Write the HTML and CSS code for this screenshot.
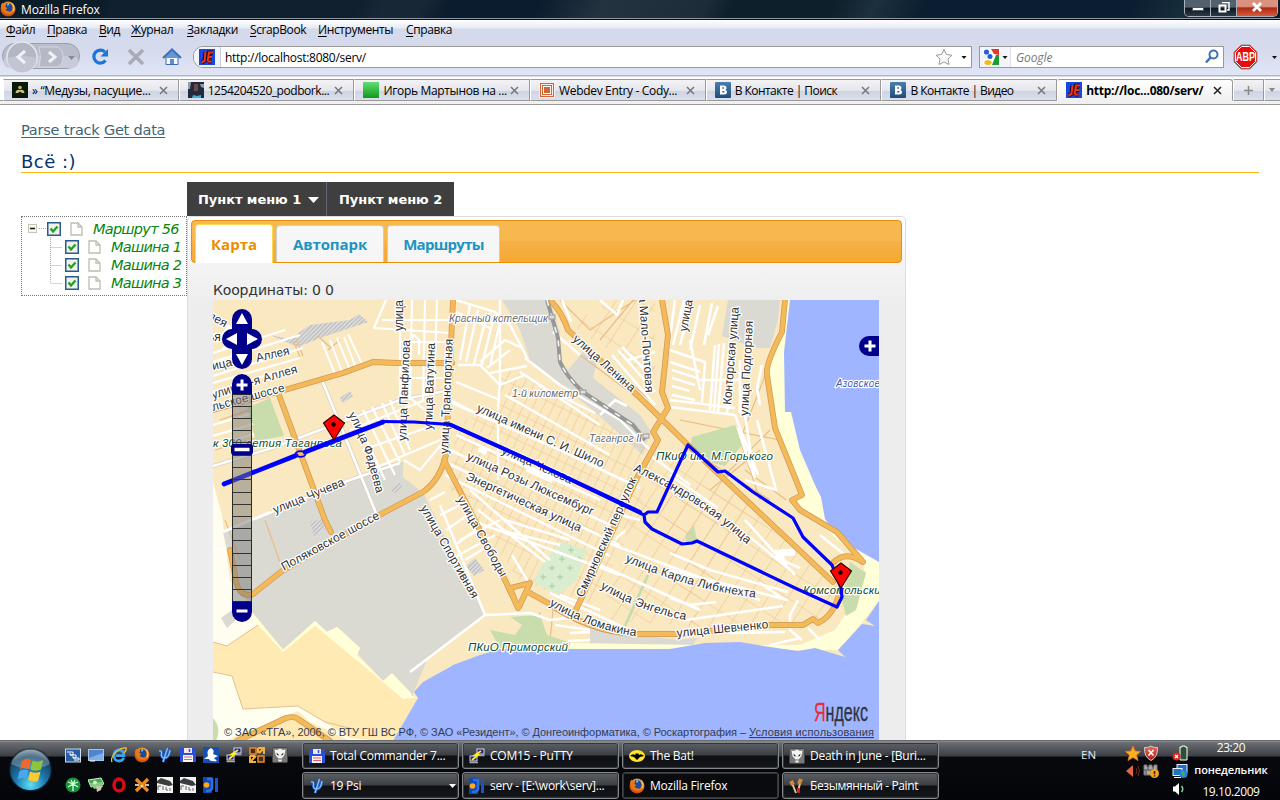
FILE: index.html
```html
<!DOCTYPE html>
<html lang="ru">
<head>
<meta charset="utf-8">
<title>Mozilla Firefox</title>
<link rel="stylesheet" href="styles.css">
</head>
<body>
<svg class="defs" width="0" height="0">
  <defs>
    <linearGradient id="gRed" x1="0" y1="0" x2="0" y2="1"><stop offset="0" stop-color="#f2695d"/><stop offset="1" stop-color="#b5160e"/></linearGradient>
    <radialGradient id="gFox" cx=".55" cy=".35" r=".7"><stop offset="0" stop-color="#ffd23c"/><stop offset=".55" stop-color="#f0801a"/><stop offset="1" stop-color="#b23408"/></radialGradient>
    <radialGradient id="gOrb" cx=".5" cy=".85" r=".9"><stop offset="0" stop-color="#5fe0f8"/><stop offset=".4" stop-color="#1c78ae"/><stop offset=".75" stop-color="#17405f"/><stop offset="1" stop-color="#9db4c2"/></radialGradient>
    <linearGradient id="gVk" x1="0" y1="0" x2="0" y2="1"><stop offset="0" stop-color="#4a7eae"/><stop offset="1" stop-color="#1f4d7a"/></linearGradient>
    <linearGradient id="gGreen" x1="0" y1="0" x2="0" y2="1"><stop offset="0" stop-color="#63dd72"/><stop offset="1" stop-color="#0e9a1c"/></linearGradient>
    <symbol id="fox" viewBox="0 0 16 16"><circle cx="8" cy="8" r="7.500" fill="url(#gFox)"/><path d="M6 2.500C9 1 12.500 3 12.600 6.800 12.600 9.500 11 11 9 11 7 11 6 10 5 8.500L7 7.500 5 6Z" fill="#1f4a9c"/><path d="M7 2.500 9.500 2 9 4 7.500 5Z" fill="#7fc4ee"/><path d="M1 4 2.500 1.500 4 3.500 6 4 5 6 7 7 5.500 8.500Q7 11 10 10.500 7 13 4 11 1 8 1 4Z" fill="#ec7613"/><path d="M12.500 2.500Q15 6 13.500 10" stroke="#ffd65a" fill="none"/></symbol>
    <symbol id="serv" viewBox="0 0 16 16"><rect width="16" height="16" fill="#1747e0"/><path d="M6.500 3 5.500 12 2.500 13.500M8.500 13 10 3.500H14M9.500 8H13M9 12.500H12.500" fill="none" stroke="#200a30" stroke-width="4"/><path d="M6.500 3 5.500 12 2.500 13.500M8.500 12.500 10 3.500H14M9.500 8H13M9 12.500H12.500" fill="none" stroke="#f2330d" stroke-width="2"/></symbol>
    <symbol id="vk" viewBox="0 0 16 16"><rect width="16" height="16" rx="1" fill="url(#gVk)"/><path d="M5 3.500V12.500H9Q12 12.500 12 10 12 8.300 10.300 8 11.500 7.500 11.500 6 11.500 3.500 8.800 3.500Z" fill="#fff"/><path d="M7.300 6H9M7.300 9.800H9.400" stroke="#34648f" stroke-width="1.400"/></symbol>
    <symbol id="x" viewBox="0 0 9 9"><path d="M1 1 8 8M8 1 1 8" stroke="currentColor" stroke-width="1.500"/></symbol>
    <symbol id="floppy" viewBox="0 0 16 16"><path d="M0 1H14L16 3V15H0Z" fill="#2a50d8"/><rect x="4" y="1" width="8" height="5" fill="#f4e4ea"/><path d="M9.500 2V5" stroke="#2a50d8" stroke-width="1.500"/><rect x="3" y="8" width="10" height="7" fill="#faf4f6"/><path d="M4 10H12M4 12.500H12" stroke="#e0606c"/></symbol>
    <symbol id="psi" viewBox="0 0 16 16"><path d="M2 4Q5 3 4.500 7 4 11 7.500 11 12 11 13 3M10.500 1 6 15" fill="none" stroke="#2463c8" stroke-width="2.800"/><path d="M2 4Q5 3 4.500 7 4 11 7.500 11 12 11 13 3M10.500 1 6 15" fill="none" stroke="#8ec5fa" stroke-width="1.200"/></symbol>
    <symbol id="putty" viewBox="0 0 16 16"><rect x="8" y="1" width="7" height="5" fill="#20209a" stroke="#d8d8d8"/><path d="M8 7.500H15.500" stroke="#aaa" stroke-width="1.500"/><rect x="1" y="8" width="7" height="5" fill="#20209a" stroke="#d8d8d8"/><path d="M.5 14.500H9" stroke="#aaa" stroke-width="1.500"/><path d="M12 3 6 7H9L3 12" fill="none" stroke="#ffee20" stroke-width="1.800"/></symbol>
    <symbol id="skull" viewBox="0 0 16 16"><rect x=".5" y=".5" width="15" height="15" rx="1" fill="#777" stroke="#444"/><path d="M8 1.500 11 3 13.500 2.500 12.500 8 10 11 9.500 14.500H6.500L6 11 3.500 8 2.500 2.500 5 3Z" fill="#f4f4f4"/><path d="M4.500 5.500 7.500 8.500 5 8ZM11.500 5.500 8.500 8.500 11 8Z" fill="#222"/><path d="M7 11V13M9 11V13" stroke="#666"/></symbol>
    <symbol id="idea" viewBox="0 0 16 16"><rect width="9" height="16" fill="#0c48b8"/><circle cx="3.500" cy="8" r="2.800" fill="#ffa91c"/><path d="M4 2H9V11Q9 14 3 14" fill="none" stroke="#2f70e0" stroke-width="2.500"/><path d="M13.500 1V15" stroke="#1f52c8" stroke-width="3"/></symbol>
    <symbol id="page" viewBox="0 0 13 14"><path d="M1 1H8L12 5V13H1Z" fill="#fff" stroke="#bdbdae" stroke-width="1.300"/><path d="M8 1V5H12" fill="none" stroke="#bdbdae" stroke-width="1.300"/></symbol>
    <symbol id="check" viewBox="0 0 14 14"><rect x=".75" y=".75" width="12.500" height="12.500" fill="#f1f1ec" stroke="#285b8e" stroke-width="1.500"/><path d="M3.500 6.500 6 9.500 10.500 4.500" fill="none" stroke="#22a022" stroke-width="2.300"/></symbol>
    <symbol id="ie" viewBox="0 0 16 16"><path d="M13 11Q11 14 8 14 3 14 3 8.500 3 3 8 3 13 3 13 8.700H5" fill="none" stroke="#38a5ef" stroke-width="2.800"/><path d="M1 15Q-1 11 5 5 11 0 15 1 16 3 13 6" fill="none" stroke="#f5c23a" stroke-width="1.300"/></symbol>
    <symbol id="cam" viewBox="0 0 16 16"><rect width="16" height="16" fill="#f2f2f2"/><path d="M0 4 4 1 13 4 16 8 12 9 0 6Z" fill="#3c3c3c"/><path d="M1 9V13M1 9H4M6 9V13M9 10V13H11M13 11V14" stroke="#666" fill="none"/></symbol>
  </defs>
</svg>
<div class="screen">
  <header class="titlebar">
    <svg class="i16" ><use href="#fox"/></svg>
    <span class="title">Mozilla Firefox</span>
    <div class="winbtns">
      <span class="wb"><svg width="12" height="10"><rect x=".5" y="5.500" width="11" height="3" fill="#fff" stroke="#555"/></svg></span>
      <span class="wb"><svg width="12" height="11"><path d="M4 .5H11V8H9" fill="none" stroke="#fff" stroke-width="1.500"/><rect x="1.500" y="3.500" width="6" height="6" fill="none" stroke="#fff" stroke-width="2"/></svg></span>
      <span class="wb close"><svg width="12" height="10"><path d="M2 1 10 9M10 1 2 9" stroke="#fff" stroke-width="2.800"/></svg></span>
    </div>
  </header>
  <div class="chrome">
    <nav class="menu">
      <span class="m1"><u>Ф</u>айл</span><span class="m2"><u>П</u>равка</span><span class="m3"><u>В</u>ид</span><span class="m4"><u>Ж</u>урнал</span><span class="m5"><u>З</u>акладки</span><span class="m6"><u>S</u>crapBook</span><span class="m7"><u>И</u>нструменты</span><span><u>С</u>правка</span>
    </nav>
    <div class="toolbar">
      <svg class="nav" width="192" height="34" viewBox="0 40 192 34">
        <rect x="2.500" y="43.500" width="77" height="25" rx="12.500" fill="#b9bdca" stroke="#9b9fac"/>
        <rect x="3.500" y="56" width="75" height="12" rx="6" fill="#c8ccda"/>
        <circle cx="22" cy="57" r="15" fill="#b3b7c3" stroke="#e5e7ef" stroke-width="1.500"/>
        <path d="M7.500 58a14.500 14.500 0 0 0 29 0Q22 54 7.500 58" fill="#c3c6d2"/>
        <path d="M39 47H57Q63 49 63 57T57 67H39Q42 57 39 47" fill="#b5b9c6" stroke="#d5d8e4"/>
        <path d="M25 51 18 57 25 63M49 52 55 57 49 62" fill="none" stroke="#eff1f6" stroke-width="3"/>
        <path d="M68 56H75L71.500 60Z" fill="#878b96"/>
        <path d="M105 52A6.500 6.500 0 1 0 105.500 60.500" fill="none" stroke="#1b75d8" stroke-width="3.200"/><path d="M108 49V56.500H100.500Z" fill="#1b75d8"/>
        <path d="M129 50 143 64M143 50 129 64" stroke="#a8abb5" stroke-width="3.500"/>
        <path d="M166 57H178V64.500H166Z" fill="#f5f8ff" stroke="#3a6cb3"/><path d="M163 58 172 49.500 181 58" fill="#6795d4" stroke="#3d72bd" stroke-width="2"/><path d="M170 64V59H174V64" fill="#5b8cce"/>
      </svg>
      <div class="url"><svg width="27" height="20"><use href="#serv" x="5" y="2" width="16" height="16"/></svg><span class="addr">http://localhost:8080/serv/</span>
        <svg class="star" width="36" height="20"><path d="M9 2.500 11.400 7.500 17 8.200 13 12 14 17.500 9 15 4 17.500 5 12 1 8.200 6.600 7.500Z" fill="#fafafa" stroke="#9b9b9b"/><path d="M26.500 9H31.500L29 12Z" fill="#111"/></svg>
      </div>
      <div class="search"><svg width="31" height="20"><rect x="3" y="2" width="16" height="16" fill="#fff"/><path d="M11 2H19V8L14 7Z" fill="#e33a2e"/><path d="M19 8V18H12L16 8Z" fill="#199e36"/><path d="M3 8 11 7 12 10 8 12 3 12Z" fill="#eaf0ff"/><circle cx="6.500" cy="5" r="2.600" fill="#2560d8"/><circle cx="10" cy="9.500" r="2.500" fill="#2560d8"/><ellipse cx="8" cy="15.500" rx="3.700" ry="2.500" fill="#f2bb1c"/><path d="M22.500 9H27.500L25 12Z" fill="#111"/></svg><span class="hint">Google</span>
        <svg width="16" height="18"><circle cx="9.500" cy="6.500" r="4" fill="none" stroke="#3f73ae" stroke-width="2"/><path d="M6.500 9.500 2 14.500" stroke="#3f73ae" stroke-width="2.500"/></svg></div>
      <svg class="abp" width="47" height="26"><path d="M8 1H17L24 8V18L17 25H8L1 18V8Z" fill="#e60d0d" stroke="#888"/><path d="M8.500 2.500H16.500L22.500 8.500V17.500L16.500 23.500H8.500L2.500 17.500V8.500Z" fill="none" stroke="#fff"/><text x="3" y="17" textLength="19" lengthAdjust="spacingAndGlyphs" class="abptext">ABP</text><path d="M39 12H44L41.500 15Z" fill="#111"/></svg>
    </div>
    <div class="tabs">
      <div class="tab"><svg class="i16" viewBox="0 0 16 16"><rect width="16" height="16" fill="#081a08"/><circle cx="8" cy="5.500" r="1.800" fill="#c5b568"/><path d="M3.500 11Q4 7 8 8 12 7 12.500 11H10L8 9.500 6 11Z" fill="#d0c078"/></svg><span>» “Медузы, пасущие...</span><svg class="tx"><use href="#x"/></svg></div>
      <div class="tab"><svg class="i16" viewBox="0 0 16 16"><rect width="16" height="16" fill="#252a3a"/><path d="M0 0H3L2 7H0ZM12 2H16V6L13 5Z" fill="#8da0ae"/><rect x="6" y="2" width="4" height="7" fill="#674b49"/><path d="M5 13 9 14 13 13V16H4Z" fill="#3fb0d8"/></svg><span class="num">1254204520_podbork...</span><svg class="tx"><use href="#x"/></svg></div>
      <div class="tab"><svg class="i16" viewBox="0 0 16 16"><rect width="16" height="16" fill="url(#gGreen)"/></svg><span>Игорь Мартынов на ...</span><svg class="tx"><use href="#x"/></svg></div>
      <div class="tab"><svg class="i16" viewBox="0 0 16 16"><rect width="16" height="16" fill="#fff"/><rect x="1.500" y="1.500" width="13" height="13" fill="#fff" stroke="#cf6534" stroke-width="1.200"/><rect x="3.500" y="3.500" width="9" height="9" fill="none" stroke="#cf6534"/><rect x="5" y="5" width="6" height="6" fill="#cf6534"/></svg><span>Webdev Entry - Cody...</span><svg class="tx"><use href="#x"/></svg></div>
      <div class="tab"><svg class="i16"><use href="#vk"/></svg><span class="vkt">В Контакте | Поиск</span><svg class="tx"><use href="#x"/></svg></div>
      <div class="tab"><svg class="i16"><use href="#vk"/></svg><span class="vkt">В Контакте | Видео</span><svg class="tx"><use href="#x"/></svg></div>
      <div class="tab active"><svg class="i16"><use href="#serv"/></svg><span>http://loc...080/serv/</span><svg class="tx"><use href="#x"/></svg></div>
      <div class="tab plus"><svg width="9" height="9"><path d="M0 4.500H9M4.500 0V9" stroke="#888" stroke-width="1.500"/></svg></div>
      <div class="tab drop"><svg width="6" height="4"><path d="M0 0H6L3 4Z" fill="#888"/></svg></div>
    </div>
  </div>
  <main class="page">
    <p class="links"><a>Parse track</a> <a>Get data</a></p>
    <h1>Всё :)</h1>
    <div class="cols">
      <div class="tree">
        <svg class="lines" width="45" height="76" viewBox="0 0 45 76"><path d="M28.500 21V67M28.500 31.500H40M28.500 49.500H40M28.500 67.500H40M17 12.500H24" stroke="#aaa" stroke-dasharray="1 1" fill="none"/><rect x="6.500" y="8.500" width="8" height="8" fill="#f8f8f2" stroke="#c5c5b8"/><path d="M8 12.500H13" stroke="#111" stroke-width="1.500"/></svg>
        <div class="node root"><svg class="cb"><use href="#check"/></svg><svg class="pg"><use href="#page"/></svg><span>Маршрут 56</span></div>
        <div class="node"><svg class="cb"><use href="#check"/></svg><svg class="pg"><use href="#page"/></svg><span>Машина 1</span></div>
        <div class="node"><svg class="cb"><use href="#check"/></svg><svg class="pg"><use href="#page"/></svg><span>Машина 2</span></div>
        <div class="node"><svg class="cb"><use href="#check"/></svg><svg class="pg"><use href="#page"/></svg><span>Машина 3</span></div>
      </div>
      <div class="right">
        <div class="bar"><span class="b1">Пункт меню 1<svg width="11" height="6"><path d="M0 0H11L5.500 6Z" fill="#fff"/></svg></span><span class="b2">Пункт меню 2</span></div>
        <div class="panel">
          <div class="uitabs"><span class="ut on t1">Карта</span><span class="ut t2">Автопарк</span><span class="ut t3">Маршруты</span></div>
          <div class="coord">Координаты: 0 0</div>
          <svg class="map" width="666" height="441" viewBox="213 300 666 441">
            <defs>
              <pattern id="hatch" width="3" height="3" patternUnits="userSpaceOnUse" patternTransform="rotate(45)"><rect width="3" height="3" fill="#dedede"/><rect width="1.200" height="3" fill="#b9b9b9"/></pattern>
              <pattern id="blkA" width="9" height="24" patternUnits="userSpaceOnUse" patternTransform="rotate(26)"><path d="M0 0V24M0 0H9" stroke="#ecc592" stroke-width="1.200" fill="none"/></pattern>
              <pattern id="blkB" width="17" height="24" patternUnits="userSpaceOnUse" patternTransform="rotate(33)"><path d="M0 0V24M0 0H17" stroke="#ecc592" stroke-width="1.200" fill="none"/></pattern>
              <path id="p1" d="M257 362 291 354"/><path id="p2" d="M251 386 301 371.500"/><path id="p3" d="M213 411 290 390"/><path id="p4" d="M348 415Q363 438 377 496"/>
              <path id="p5" d="M275 514 348 484"/><path id="p6" d="M284 571 382 517"/><path id="p7" d="M406 441 410 338"/><path id="p8" d="M403 331V298"/><path id="p9" d="M432 430 435 341"/><path id="p10" d="M448 454 453 337"/>
              <path id="p11" d="M572 340 633 394"/><path id="p12" d="M637 270 646 396"/><path id="p13" d="M476 411 605 469"/><path id="p14" d="M501 453 573 485"/><path id="p15" d="M466 459 595 517"/><path id="p16" d="M465 479 582 533"/>
              <path id="p17" d="M633 471Q700 500 750 547"/><path id="p18" d="M583 598 638 477"/><path id="p19" d="M420 508 474 602"/><path id="p20" d="M457 499 502 580"/><path id="p21" d="M625 561Q690 590 759 598"/><path id="p22" d="M600 588Q640 612 690 621"/><path id="p23" d="M549 605Q590 630 640 637"/><path id="p24" d="M677 637 771 628"/>
              <path id="p25" d="M731 405 739 305"/><path id="p26" d="M748 416 753 319"/><path id="p27" d="M687 332 693 298"/><path id="p28" d="M207 318 229 330"/><path id="p29" d="M213 370 236 365"/><path id="p30" d="M213 399 240 390"/><path id="p31" d="M208 341 224 341"/>
            </defs>
            <rect x="213" y="300" width="666" height="441" fill="#fae8c1"/>
            <path d="M213 482 222 515 230 580 250 605 262 622 227 646 213 642Z" fill="#fffdf0"/>
            <g fill="#dadad2">
              <path d="M262 517 347 480 381 467 403 462 403 477 423 493 485 615 427 660 412 696 392 674 383 681 357 653 360 648 337 627 327 632 315 621 283 649 252 612 227 550 223 532Z"/>
              <path d="M502 300H550L556 320 560 332 557 345 562 362 568 370 583 352 597 362 593 378 640 415 650 430 643 455 595 412 570 392 558 382 530 360 520 330Z"/>
              <path d="M728 300H780L778 320 770 348 755 348 722 336Z"/><path d="M590 628 677 640 697 638 690 650H590Z"/><path d="M221 618 232 610 250 607 227 628Z"/>
            </g>
            <path d="M270 335 290 339 310 325 350 320 359 314 368 322 320 338 298 347ZM340 398 350 391 353 396 343 403ZM310 522 322 519 327 527 314 537ZM390 490 399 482 403 487 395 493ZM466 566 475 558 484 570 474 576Z" fill="url(#hatch)"/>
            <path d="M456 430 640 515 590 610 520 580 450 490ZM500 365 560 395 650 450 640 510 460 422 500 405Z" fill="url(#blkA)"/>
            <path d="M650 455 688 445 840 580 830 610 770 630 600 620ZM610 300H655V380L570 325Z" fill="url(#blkB)"/>
            <path d="M300 357 293 340M303 356 296 339M330 347 318 336M340 340 328 350M220 420 265 405M215 450 260 437M560 300 590 330 650 290M600 340 633 300M567 345 640 400M610 365 650 400M775 350 740 440 760 500M680 420 780 440M690 450 770 500M745 470 800 510M710 490 760 450M770 430 720 480M540 612 535 640M553 610 550 640M225 520 240 560M265 520 282 568" fill="none" stroke="#e8bd88" stroke-width="1.200"/>
            <path d="M247 408 270 398 284 436 256 441ZM692 437 710 432 735 425 742 445 725 466 710 462 690 448ZM510 617 540 615 547 635 577 645 500 648 490 630 515 635 522 625ZM850 562 866 573 856 610 846 616 842 600ZM686 534 694 526 697 540 686 543Z" fill="#c9dcac"/>
            <path d="M562 542 587 550 577 580 558 595 533 582 545 560Z" fill="#daedcf"/>
            <path d="M648 575 625 626" stroke="#c9dcac" stroke-width="3"/>
            <path d="M568 550H574M571 547V553M559 559H565M562 556V562M576 559H582M579 556V562M549 568H555M552 565V571M567 568H573M570 565V571M540 577H546M543 574V580M557 577H563M560 574V580M549 586H555M552 583V589" stroke="#a8cba5"/>
            <path d="M252 612 283 650 315 621 327 632 337 627 360 648 357 655 383 681 392 674 412 696 418 698 403 699 315 626 283 653 255 622Z" fill="#ffffd8"/>
            <path d="M327 632 337 627 360 648 357 655ZM383 681 392 673 412 694 403 699Z" fill="#ffffd8"/>
            <path d="M213 642 227 646 258 625 283 652 315 626 403 699 417 698 393 741H213Z" fill="#ffeab3"/>
            <path d="M213 672 232 676 243 709 298 706 350 738 380 741H213Z" fill="#fffff0"/><path d="M225 741 298 711 310 722 350 741Z" fill="#ffeab3"/>
            <path d="M213 642 227 646 258 625M213 672 232 676 243 709 298 706 325 722 353 729" fill="none" stroke="#e9bd94"/>
            <path d="M787 300 767 375 775 430 802 495 792 500 863 562 865 575 845 615 835 630 800 645 700 645 570 643V650H840L879 601V300Z" fill="#ffffd8"/>
            <path d="M792 500 863 562 865 575 845 610 832 628 800 642 700 641 700 600 770 500Z" fill="#fae8c1"/>
            <path d="M660 500 720 480 840 585 832 622 690 632Z" fill="url(#blkB)"/>
            <path d="M850 562 866 573 856 610 846 616 842 600Z" fill="#c9dcac"/>
            <path d="M790 300 784 352 785 412 791 412 800 450 815 485 821 497 825 519 840 540 879 562V300ZM879 601 866 620 875 626 862 624 838 650 845 657 815 648 798 651 770 647 740 642 705 643 670 649H500L480 655 453 665 450 667 423 682 414 692 418 698 393 741H879Z" fill="#9fb5ff"/>
            <path d="M213 718Q222 728 216 741H213Z" fill="#c9dcac"/>
            <g fill="none" stroke="#d6cfc0" stroke-width="4" stroke-linejoin="round">
              <path d="M213 466 272 448 400 400 450 390M322 380 376 513 M255 519 347 481 400 463"/>
            </g>
            <g fill="none" stroke="#fff" stroke-width="2.600" stroke-linejoin="round">
              <path d="M213 466 272 448 400 400 450 390M322 380 376 513M255 519 347 481 400 463M223 532 270 512M213 549 226 550"/>
              <path d="M213 353 285 330M213 362 300 335M213 376 303 348M213 383 300 358M213 425 250 414M213 436 253 424M213 446 254 434M213 320 262 342M213 334 240 345M230 325 216 342M240 330 222 350M252 335 232 355M213 392 290 368" stroke-width="2.200"/>
              <path d="M322 342 335 374M330 340 342 372M337 338 350 370M344 337 356 368M348 334 362 364" stroke-width="2"/>
              <path d="M386 300 374 328 450 333M400 300V395M412 300 410 400M425 300 423 400M437 300 434 395M382 320H450M410 340 414 335 419 340V355M400 342H450M405 378H445M400 390 425 410M355 415 385 480M363 410 395 475M372 407 400 462M382 403 405 455M390 400 410 450M350 430 430 398M362 450 435 425M375 468 440 440M404 460 420 470 445 440" stroke-width="2.200"/>
              <path d="M456 300 495 312 510 325 523 350 527 358M456 312 490 328M470 305 460 360M478 310 466 362M486 318 474 364M493 320 482 365M500 322 490 366M458 365H480L500 385V300M480 362 505 340 522 348M487 368 510 350M490 373 527 366M500 385 525 375 555 395M525 358 560 385 620 420 650 450M500 380 498 410M456 382 500 400M450 400 490 420M498 412V480M520 372 600 425M505 395 610 455M538 385 595 413" stroke-width="2.400"/>
              <path d="M553 332 580 355M562 300 571 322M600 300 617 315 623 300M612 355 655 405M618 350 655 392M622 347 650 375M628 360 655 352M600 415 615 400 627 406"/>
              <path d="M450 402 560 450 640 488M456 435 600 500M450 450 610 525M447 463 620 545M445 475 610 556M470 520 620 575M460 540 500 520M450 560 495 535M470 490 550 560M478 510 545 562M500 530 560 545M505 520 570 540M430 500 445 492M440 515 460 505M446 530 468 515M455 545 480 527M465 560 485 548M485 615 410 672M485 615 530 613 550 620 580 617M550 593 640 635M440 505 485 615M512 555 530 585M555 625 590 630M570 633 590 632M568 641 590 640M600 540 760 600M600 565 700 610M560 595 600 610M620 515 640 520M615 540 625 530" stroke-width="2.500"/>
              <path d="M675 300 668 352M684 300 673 345M692 300 680 345M700 305 690 350M712 303 704 345M718 306 708 335M670 350 705 362 702 402M670 362 700 372M672 370 697 378M672 378 695 385M672 386 690 391M672 395 695 400M690 340 700 390M670 400 735 408M670 407 735 415M715 345 710 410M719 344 714 411M724 343 718 412M732 345 727 415M740 360V413M762 365 757 388 760 405M700 380H742M735 415 758 475M745 415 754 475M757 420 776 490 745 480M738 428 748 460 755 478M670 475 718 508M650 455 690 485M745 520 795 575M770 555 800 568M750 537 790 570" stroke-width="2.600"/>
              <path d="M670 553 710 570 788 592M670 570 788 600M670 598 690 605 716 602M686 620 783 606M730 633 785 632M798 600 790 615 790 630 802 640M770 645 800 638M808 628 820 640M820 535 845 555 870 560M775 550 785 560M760 583 785 600" stroke-width="2.600"/>
              <path d="M479 448 487 452M527 468 553 480M778 553 795 552" stroke-width="7"/>
            </g>
            <g fill="none" stroke-linejoin="round" stroke-linecap="round">
              <g stroke="#d0985c" stroke-width="5.800">
                <path d="M213 410 288 389 343 373 373 362 397 363H452M279 395 300 452 325 520 331 532M230 550 237 585Q242 598 253 594L282 571 335 540 385 512 423 492Q440 480 446 455L453 300M444 460 462 495 505 580 518 608 510 588 530 583 519 607M528 592 548 603Q590 632 635 634H677L770 625 803 625 813 619 818 623Q835 615 840 590"/>
                <path d="M550 300Q562 312 568 330L632 390 688 445 762 515 833 582M662 300 668 335 662 392 668 408 653 432 658 440 637 478 575 612M785 300 782 332Q765 365 767 375L775 428 802 495 792 500 800 510 837 532 863 562Q845 550 833 563"/>
                <path d="M237 741 286 718Q294 716 298 719L330 741"/>
              </g>
              <g stroke="#f5ba58" stroke-width="4.300">
                <path d="M213 410 288 389 343 373 373 362 397 363H452M279 395 300 452 325 520 331 532M230 550 237 585Q242 598 253 594L282 571 335 540 385 512 423 492Q440 480 446 455L453 300M444 460 462 495 505 580 518 608 510 588 530 583 519 607M528 592 548 603Q590 632 635 634H677L770 625 803 625 813 619 818 623Q835 615 840 590"/>
                <path d="M550 300Q562 312 568 330L632 390 688 445 762 515 833 582M662 300 668 335 662 392 668 408 653 432 658 440 637 478 575 612M785 300 782 332Q765 365 767 375L775 428 802 495 792 500 800 510 837 532 863 562Q845 550 833 563"/>
                <path d="M237 741 286 718Q294 716 298 719L330 741"/>
              </g>
              <path d="M547 300 558 338 560 362Q566 376 583 392L633 425 645 440" stroke="#979797" stroke-width="4" stroke-linecap="butt"/><path d="M547 300 558 338 560 362Q566 376 583 392L633 425" stroke="#f4f4f4" stroke-width="1.600" stroke-dasharray="6 8" stroke-linecap="butt"/>
            </g>
            <g class="st">
              <text textLength="34"><textPath href="#p1">Аллея</textPath></text><text textLength="49"><textPath href="#p2">-я Аллея</textPath></text><text textLength="75"><textPath href="#p3">льское шоссе</textPath></text>
              <text textLength="84"><textPath href="#p4">улица Фадеева</textPath></text><text textLength="76"><textPath href="#p5">улица Чучева</textPath></text><text textLength="110"><textPath href="#p6">Поляковское шоссе</textPath></text>
              <text textLength="101"><textPath href="#p7">улица Панфилова</textPath></text><text textLength="31"><textPath href="#p8">улица</textPath></text><text textLength="87"><textPath href="#p9">улица Ватутина</textPath></text><text textLength="115"><textPath href="#p10">улица Транспортная</textPath></text>
              <text textLength="79"><textPath href="#p11">улица Ленина</textPath></text><text textLength="123"><textPath href="#p12">улица Мало-Почтовая</textPath></text><text textLength="138"><textPath href="#p13">улица имени С. И. Шило</textPath></text><text textLength="76"><textPath href="#p14">улица Чехова</textPath></text>
              <text textLength="138"><textPath href="#p15">улица Розы Люксембург</textPath></text><text textLength="126"><textPath href="#p16">Энергетическая улица</textPath></text><text textLength="136"><textPath href="#p17">Александровская улица</textPath></text><text textLength="130"><textPath href="#p18">Смирновский переулок</textPath></text>
              <text textLength="105"><textPath href="#p19">улица Спортивная</textPath></text><text textLength="90"><textPath href="#p20">улица Свободы</textPath></text><text textLength="136"><textPath href="#p21">улица Карла Либкнехта</textPath></text><text textLength="92"><textPath href="#p22">улица Энгельса</textPath></text><text textLength="93"><textPath href="#p23">улица Ломакина</textPath></text><text textLength="92"><textPath href="#p24">улица Шевченко</textPath></text>
              <text textLength="98"><textPath href="#p25">Конторская улица</textPath></text><text textLength="95"><textPath href="#p26">улица Подгорная</textPath></text><text textLength="32"><textPath href="#p27">улица</textPath></text><text><textPath href="#p28">лея</textPath></text><text><textPath href="#p29">ица</textPath></text><text><textPath href="#p30">улиц</textPath></text><text><textPath href="#p31">ья</textPath></text>
            </g>
            <g class="st rail"><text x="449" y="322" textLength="99">Красный котельщик</text><text x="512" y="397" textLength="66">1-й километр</text><text x="589" y="442" textLength="53">Таганрог II</text></g>
            <g fill="#ddd" stroke="#999"><rect x="549" y="315" width="6" height="4"/><rect x="580" y="390" width="6" height="4"/><rect x="643" y="434" width="6" height="4"/></g>
            <g class="st park"><text x="213" y="447" textLength="129">к 300-летия Таганрога</text><text x="656" y="460" textLength="117">ПКиО им. М.Горького</text><text x="468" y="651" textLength="100">ПКиО Приморский</text><text x="803" y="594" textLength="84">Комсомольский</text></g>
            <g class="st sea"><text x="836" y="387" textLength="44">Азовское</text></g>
            <g fill="none" stroke="#00f" stroke-linejoin="round" stroke-linecap="round">
              <path d="M224 484 296 455.500M305 452 383 422" stroke-width="4.600"/><path d="M383 421.500 414 422 450 424.500 540 465 625 506 644 515 648 512 657 512 680 462 688 445 718 472 725 471 753 492 793 518 803 537 832 565 841 588 842 597 837 607 795 588 697 541 692 543 682 544 670 538 652 529 645 522 644 515" stroke-width="3.200"/><path d="M450 424.500 540 465 640 512" stroke-width="4"/><ellipse cx="300.500" cy="454" rx="5" ry="2.800" stroke-width="1.700"/>
            </g>
            <g fill="#f00" stroke="#300" stroke-width="1.200" stroke-linejoin="round"><path d="M334 415 344.500 423 334 440 323.500 423ZM841 563 851.500 571 841 588 830.500 571Z"/></g><circle cx="333.500" cy="424.500" r="2.200"/><circle cx="840.500" cy="572.500" r="2.200"/>
            <g fill="#00008b">
              <rect x="232" y="309" width="20" height="60" rx="10"/><rect x="222" y="329" width="40" height="20" rx="10"/><path d="M232 394V384A10 10 0 0 1 252 384V394ZM232 602V612A10 10 0 0 0 252 612V602Z"/><path d="M879 336H869A10 10 0 0 0 869 356H879Z"/>
            </g>
            <path d="M242 313 248 324H236ZM242 365 236 354H248ZM226 339 237 333V345ZM258 339 247 333V345Z" fill="#fff"/>
            <path d="M236.500 385H247.500M242 379.500V390.500M236.500 611H247.500M864.500 346H875.500M870 340.500V351.500" stroke="#fff" stroke-width="3"/>
            <rect x="232.500" y="394.500" width="19" height="207" fill="#777" fill-opacity=".5" stroke="#2a2a2a"/>
            <path d="M233 406.500H251M233 418.500H251M233 430.500H251M233 442.500H251M233 455.500H251M233 467.500H251M233 479.500H251M233 492.500H251M233 504.500H251M233 516.500H251M233 528.500H251M233 540.500H251M233 553.500H251M233 565.500H251M233 577.500H251M233 589.500H251" stroke="#333"/>
            <rect x="231" y="444" width="22" height="11" rx="3" fill="#00008b"/><path d="M234.500 449.500H249.500" stroke="#fff" stroke-width="3.500"/>
            <g class="logo"><text x="814" y="721" textLength="54" lengthAdjust="spacingAndGlyphs"><tspan class="ya">Я</tspan>ндекс</text></g>
            <g class="copy"><text x="224" y="736" textLength="522">© ЗАО «ТГА», 2006, © ВТУ ГШ ВС РФ, © ЗАО «Резидент», © Донгеоинформатика, © Роскартография –</text><text x="749" y="736" textLength="125" class="ul">Условия использования</text></g>
          </svg>
        </div>
      </div>
    </div>
  </main>
  <footer class="taskbar">
    <svg class="orb" width="64" height="60" viewBox="0 740 64 60"><circle cx="30.500" cy="770" r="21" fill="url(#gOrb)" stroke="#0a1a26" stroke-width="1.500"/><path d="M11 764A20 20 0 0 1 50 764Q31 774 11 764" fill="#fff" fill-opacity=".25"/><path d="M22 761Q26 757.500 31 760L29 769Q24 767 20 769.500Z" fill="#f0682a"/><path d="M32.500 760.500Q37 763 43 760L41 769.500Q35 772 30.500 769.500Z" fill="#8dc63a"/><path d="M19.500 771Q24 768.500 28.500 770.500L26.500 779Q22 777 17.500 779.500Z" fill="#48a8ea"/><path d="M30 771.500Q35 774 40.500 771.500L38 781Q33 783 28 779.500Z" fill="#fdcb2e"/></svg>
    <div class="quick">
      <svg class="i16" viewBox="0 0 16 16"><rect x=".5" y="2" width="15" height="13" fill="#2b5fa5" stroke="#ccdcf0"/><path d="M2 5H8V8H5V6M5 8H11V11H8V9M8 11H14V13H9" stroke="#fff" fill="none"/></svg>
      <svg class="i16" viewBox="0 0 16 16"><rect x=".5" y="2.500" width="15" height="11" fill="#4d86cf" stroke="#a9c5e6"/><path d="M1 11 15 6V13H1Z" fill="#7db0e8"/><path d="M2 14H7" stroke="#fff"/></svg>
      <svg class="i16"><use href="#ie"/></svg><svg class="i16"><use href="#fox"/></svg><svg class="i16"><use href="#psi"/></svg><svg class="i16"><use href="#floppy"/></svg>
      <svg class="i16" viewBox="0 0 16 16"><rect width="16" height="16" fill="#1450b0"/><path d="M8 1Q3 3 5 9L1 12 6 12Q7 15 14 14L11 11 15 9 10 7Q12 3 8 1Z" fill="#fff"/></svg>
      <svg class="i16"><use href="#putty"/></svg>
      <svg class="i16" viewBox="0 0 16 16"><path d="M1 1H7V7H1ZM9 9H15V15H9Z" fill="#4a2c10" stroke="#e88a2c" stroke-width="1.500"/><path d="M9 1H15V7M9 1V5H12M15 1 10 6M1 9V15H7M2 14 7 9M1 9H5V12" stroke="#f0b040" stroke-width="2" fill="none"/></svg>
      <svg class="i16"><use href="#skull"/></svg>
      <svg class="i16" viewBox="0 0 16 16"><circle cx="8" cy="8" r="7.500" fill="#18943a"/><path d="M8 7V14M8 7 3 5M8 7 13 5M8 7 3 10M8 7 13 10M8 7 6 3M8 7 10 3" stroke="#d8ffe0" stroke-width="1.300"/></svg>
      <svg class="i16" viewBox="0 0 16 16"><path d="M0 3 13 1 16 7 3 10Z" fill="#43a84c" stroke="#d9f2d5"/><path d="M2 6 14 5 15 10 6 12Z" fill="#86cc7c"/><path d="M8 9H14L13 13 9 15Z" fill="#c8c8b5"/><circle cx="7" cy="5.500" r="2" fill="#d8f0d0"/></svg>
      <svg class="i16" viewBox="0 0 16 16"><ellipse cx="8" cy="8" rx="5" ry="6" fill="none" stroke="#d50d12" stroke-width="3.500"/></svg>
      <svg class="i16" viewBox="0 0 16 16"><path d="M2 2 14 14M14 2 2 14" stroke="#ee8a18" stroke-width="3.200"/><path d="M1 8H5M7 9H9M11 8H15" stroke="#fff" stroke-width="1.500"/></svg>
      <svg class="i16"><use href="#cam"/></svg><svg class="i16"><use href="#cam"/></svg><svg class="i16"><use href="#idea"/></svg>
    </div>
    <div class="tasks">
      <div class="task"><svg class="i16"><use href="#floppy"/></svg><span>Total Commander 7...</span></div>
      <div class="task"><svg class="i16"><use href="#putty"/></svg><span>COM15 - PuTTY</span></div>
      <div class="task"><svg class="i16" viewBox="0 0 16 16"><ellipse cx="8" cy="8" rx="8" ry="6" fill="#ffe52c"/><path d="M1 8Q4 5 6 7L7 5 8 6 9 5 10 7Q12 5 15 8L11 9 8 12 5 9Z"/></svg><span>The Bat!</span></div>
      <div class="task"><svg class="i16"><use href="#skull"/></svg><span>Death in June - [Buri...</span></div>
      <div class="task"><svg class="i16"><use href="#psi"/></svg><span>19 Psi</span><svg class="arr" width="7" height="4"><path d="M0 0H7L3.500 4Z" fill="#fff"/></svg></div>
      <div class="task"><svg class="i16"><use href="#idea"/></svg><span>serv - [E:\work\serv]...</span></div>
      <div class="task cur"><svg class="i16"><use href="#fox"/></svg><span>Mozilla Firefox</span></div>
      <div class="task"><svg class="i16" viewBox="0 0 16 16"><path d="M3 5 7 15M11 5 9 14" stroke="#e8c090" stroke-width="2"/><path d="M2 3 4 7M12 1 10 6" stroke="#d08a3a" stroke-width="4"/><path d="M9.500 10V15" stroke="#c22" stroke-width="2.500"/></svg><span class="ru">Безымянный - Paint</span></div>
    </div>
    <span class="lang">EN</span>
    <div class="tray">
      <svg class="i16" viewBox="0 0 16 16"><path d="M8 1 10 6 15.500 6.500 11.500 10 13 15.500 8 12.500 3 15.500 4.500 10 .5 6.500 6 6Z" fill="#fdb01f" stroke="#f07f12" stroke-width=".8"/></svg>
      <svg class="i16" viewBox="0 0 16 16"><path d="M8 1Q11 3 14.500 2.500 15 12 8 15.500 1 12 1.500 2.500 5 3 8 1Z" fill="url(#gRed)" stroke="#ccc"/><path d="M5.500 5 10.500 10.500M10.500 5 5.500 10.500" stroke="#fff" stroke-width="1.800"/></svg>
      <svg class="i16 g3" viewBox="0 0 16 16"><path d="M8 2H10V1H13V2H15V15H8Z" fill="#2c4f37" stroke="#fff"/><circle cx="4.500" cy="11.500" r="4" fill="#dd2323"/><path d="M3 10 6 13M6 10 3 13" stroke="#fff" stroke-width="1.300"/></svg>
      <svg class="i16" viewBox="0 0 16 16"><path d="M1 8 8 2V14Z" fill="#dd6645"/><path d="M11 5Q13 8 11 11M13 3Q16 8 13 13" stroke="#702a1a" fill="none"/></svg>
      <svg class="i16" viewBox="0 0 16 16"><path d="M1 2H4V4H6V2H9V4H11V2H14V12H1Z" fill="#aaa" stroke="#777"/><path d="M1 7H14M5 4V7M10 4V7M3 7V12M8 7V12" stroke="#555"/><circle cx="11.500" cy="10.500" r="4.500" fill="#f5a41a"/><path d="M11.500 8V11.200M11.500 12.300V13.500" stroke="#222" stroke-width="1.500"/></svg>
      <svg class="i16 g3" viewBox="0 0 16 16"><rect x="5" y="1.500" width="10" height="8" fill="#1d72c4" stroke="#e8f2fb"/><rect x="1" y="5.500" width="9" height="7" fill="#1d72c4" stroke="#e8f2fb"/><path d="M2 14.500H9" stroke="#fff"/><circle cx="11.500" cy="11" r="4" fill="#2c7de8"/><path d="M9 9 12 8 13 11 11 14" fill="#35b551"/></svg>
      <svg class="i16 g3" viewBox="0 0 16 16"><path d="M1 5.500H3L7 2V14L3 10.500H1Z" fill="#fff"/><path d="M9.500 5Q12 8 9.500 11" stroke="#7fd493" stroke-width="1.500" fill="none"/></svg>
    </div>
    <div class="clock"><span class="c1">23:20</span><span class="c2">понедельник</span><span class="c3">19.10.2009</span></div>
  </footer>
</div>
</body>
</html>
```
FILE: styles.css
```css
*{box-sizing:border-box}
body{margin:0;font-family:"Open Sans","Noto Sans",sans-serif;font-size:12px;color:#000;overflow:hidden}
svg{display:block;flex:none}
.defs{position:absolute}
.i16{width:16px;height:16px}
.screen{width:1280px;height:800px;display:flex;flex-direction:column;overflow:hidden;background:#fff}

.titlebar{height:20px;flex:none;display:flex;align-items:flex-start;background:linear-gradient(115deg,#0c1c29 0 8%,#10202e 9% 28%,#182736 30% 33%,#0b1c2f 35% 42%,#243340 47%,#1c2c38 55%,#0e1f2c 57% 65%,#1d303e 68%,#0b1e31 72% 88%,#162c3b 92%,#0b1c29);border-bottom:1px solid #090b18;box-shadow:inset 0 -1px #8d98a2}
.titlebar .i16{margin-top:1px}
.title{color:#fff;margin:2px auto 0 5px;line-height:16px;font-size:12px;letter-spacing:-.15px}
.winbtns{display:flex;height:17px;width:94px;margin-right:2px;border:1px solid #aab3bb;border-top:0;border-radius:0 0 5px 5px;overflow:hidden}
.wb{width:26px;display:flex;justify-content:center;padding-top:2px;border-right:1px solid #aab3bb;background:linear-gradient(#53616e 0 45%,#0b1620 50%,#2c3a48)}
.wb.close{flex:1;border:0;background:linear-gradient(#d99280 0 40%,#ad2a14 50%,#d8593c)}

.chrome{height:85px;flex:none;background:linear-gradient(#fff 0,#e6eaf5 8px,#d4daec 9px,#d5dbed 30px,#e0e5f6 54px,#e0e5f6 55px,#aeb6c8 55px 56px,#fff 57px);border-bottom:1px solid #999}
.menu{height:20px;display:flex;padding:1px 0 0 6px;line-height:18px;letter-spacing:-.4px;white-space:nowrap}
.menu u{text-underline-offset:2px}
.m1{width:41px}.m2{width:52px}.m3{width:32px}.m4{width:56px}.m5{width:63px}.m6{width:68px}.m7{width:88px}
.toolbar{height:34px;display:flex;align-items:center}
.nav{margin-right:1px}
.url{width:779px;flex:none;height:22px;display:flex;align-items:center;background:#fff;border:1px solid #999;border-radius:10px 0 0 10px}
.url>svg:first-child{border-right:1px solid #ccd;border-radius:9px 0 0 9px;background:#f2f4fb}
.addr{margin:0 auto 0 4px;font-size:12px;letter-spacing:-.27px}
.search{width:245px;flex:none;height:22px;margin-left:7px;display:flex;align-items:center;background:#fff;border:1px solid #999}
.search>svg:first-child{border-right:1px solid #dde;background:#f4f5fa}
.hint{font-style:italic;color:#777;margin:0 auto 0 5px;letter-spacing:-.1px}
.search>svg:last-child{margin-right:3px}
.abp{margin-left:9px}
.abptext{font:bold 12px "Liberation Sans",sans-serif;fill:#fff}
.tabs{height:30px;display:flex;align-items:flex-start;padding:5px 0 0 3px;background:linear-gradient(transparent 0 26px,#999 26px 27px,#f0f0f0 27px)}
.tab{width:175.700px;height:22px;flex:none;display:flex;align-items:center;padding:0 10px 0 8px;border:1px solid #999;border-left-color:#fff;border-right-color:#999;background:linear-gradient(#f3f3f6,#e4e5ec 11px,#ced3e2 11px,#dce0ed);white-space:nowrap}
.tab span{margin:0 auto 0 4px;letter-spacing:-.33px}
.tab .num{letter-spacing:-.45px}
.tab .vkt{letter-spacing:-.55px}
.tx{width:9px;height:9px;color:#777}
.tab.active{background:linear-gradient(#fff,#f0f0f0);border-bottom-color:#f0f0f0;border-radius:3px 3px 0 0}
.active span{font-weight:bold;letter-spacing:-.25px}
.active .tx{color:#222}
.plus{width:31px;padding:0;justify-content:center}
.drop{width:17px;padding:0;justify-content:center}

.page{flex:1;min-height:0;padding:16px 21px 0;font-family:"DejaVu Sans",Verdana,sans-serif;overflow:hidden}
.links{margin:0;height:24px;line-height:18px;font-size:14.500px;color:#35627a;letter-spacing:-.22px}
.links a{text-decoration:underline;text-decoration-thickness:1px;text-underline-offset:2px;color:#3f6478}
h1{margin:5px 0 9px;height:23px;line-height:24px;border-bottom:1px solid #fdb913;color:#00356e;font-weight:normal;font-size:18px;letter-spacing:.5px}
.cols{display:flex;align-items:flex-start}
.tree{width:166px;height:80px;margin-top:34px;border:1px dotted #777;padding-top:3px;position:relative}
.lines{position:absolute;left:0;top:-1px}
.node{height:18px;display:flex;align-items:center;padding-left:43px;white-space:nowrap;font:italic 14.500px "DejaVu Sans",sans-serif;color:#0a850a;letter-spacing:-.75px}
.node.root{padding-left:25px}
.cb{width:14px;height:14px}
.pg{width:13px;height:14px;margin:0 10px 0 9px}
.right{width:719px}
.bar{height:34px;display:flex}
.bar span{background:#3f3f3f;color:#fff;font-weight:bold;font-size:13px;display:flex;align-items:center;padding:1px 0 0 11px;letter-spacing:-.06px;white-space:nowrap}
.bar svg{margin-left:7px}
.bar .b1{width:140px;border-right:1px solid #667}
.bar .b2{width:127px;padding-left:12px}
.panel{height:530px;border:1px solid #ddd;border-radius:4px;padding:3px;background:linear-gradient(#fff 0,#f4f4f4 46px,#ededed 92px)}
.uitabs{height:43px;width:711px;border:1px solid #e78f08;border-radius:4px;background:linear-gradient(#f7b850 0 48%,#f6b047 50%,#f5a932);display:flex;align-items:flex-end;padding-left:3px;gap:3px}
.ut{height:37px;border:1px solid #ccc;border-bottom:0;border-radius:4px 4px 0 0;background:linear-gradient(#f7f7f7,#f5f5f5);display:flex;align-items:center;justify-content:center;font:bold 15px "Open Sans",sans-serif;color:#1c94c4;padding-bottom:1px}
.ut.on{background:#fff;color:#eb8f00;height:39px;margin-bottom:-1px;border-color:#fbd850}
.t1{width:78px}.t2{width:108px;letter-spacing:-.1px}.t3{width:113px;letter-spacing:-.7px}
.coord{height:37px;padding:18px 0 0 22px;line-height:18px;font-size:14px;color:#333;letter-spacing:-.15px}
.map{margin-left:22px}
.st{font:12px "Liberation Sans",sans-serif;fill:#303034;stroke:#fff;stroke-width:2.500px;stroke-linejoin:round;paint-order:stroke}
.rail{font-size:10.500px;font-style:italic;fill:#66666a}
.park{font-size:11.500px;font-style:italic;fill:#0a5030}
.sea{font-size:10px;font-style:italic;fill:#3858b0}
.logo{font:25px "Liberation Sans",sans-serif;fill:#30343e;stroke:#30343e;stroke-width:.3px}
.ya{fill:#ee2838;stroke:#ee2838}
.copy{font:11px "Liberation Sans",sans-serif;fill:#333c50}
.ul{text-decoration:underline}

.taskbar{height:60px;flex:none;position:relative;display:flex;background:linear-gradient(#4a4d50 0,#8a8d90 1px,#686b6f 3px,#3c3f43 16px,#07090d 17px,#03050a 100%);color:#fff}
.orb{flex:none}
.quick{width:230px;flex:none;margin-left:1px;padding-top:7px;display:grid;grid-template-columns:repeat(10,23px);grid-auto-rows:30px;align-content:start}
.tasks{flex:none;margin-left:7px;padding-top:2px;display:grid;grid-template-columns:repeat(4,157px);column-gap:3px;row-gap:3px;grid-auto-rows:27px;align-content:start}
.task{display:flex;align-items:center;padding:0 2px 0 6px;border:1px solid #85888b;border-radius:3px;box-shadow:inset 0 0 0 1px #33363a;background:linear-gradient(#5c5f63,#3c3f43 12px,#0d0f13 13px,#14171b);white-space:nowrap;letter-spacing:-.25px}
.task span{margin-left:5px}
.task .ru{letter-spacing:-.4px}
.task .arr{margin-left:auto}
.task.cur{background:#090b0e;border-color:#444}
.lang{position:absolute;left:1081px;top:7px;line-height:16px;font-size:11.500px;color:#e8e8e8}
.tray{position:absolute;left:1125px;top:5px;display:grid;grid-template-columns:18px 29px 16px;grid-auto-rows:18px}
.tray .g3{grid-column:3}
.clock{position:absolute;left:1190px;width:82px;top:0;height:60px;display:flex;flex-direction:column;align-items:center;justify-content:space-between;line-height:16px;letter-spacing:-.4px}
.c2{font-weight:600;font-size:11px;letter-spacing:-.1px}
.clock .c3{font-size:12px}
```
